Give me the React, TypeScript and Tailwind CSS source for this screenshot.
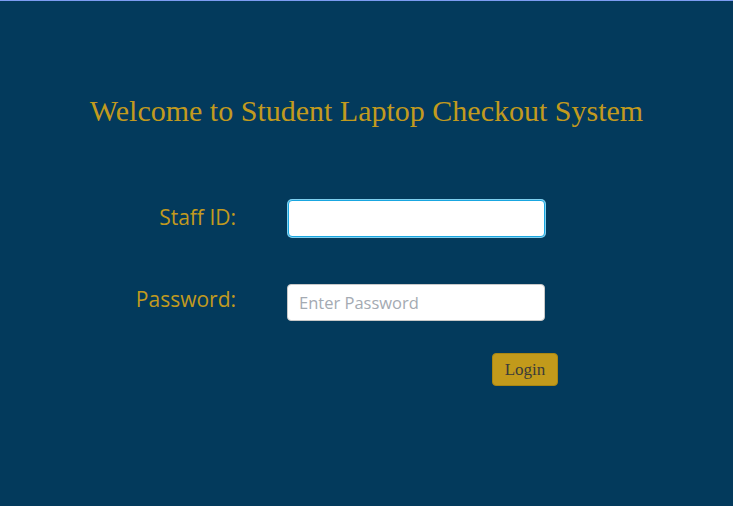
export default function App() {
  return (
    <div className="h-[506px] w-[733px] overflow-hidden border-t border-[#7d9cf2] bg-[#033a5c]">
      <h1 className="mt-[92px] text-center font-['Liberation_Serif',serif] text-[30px] leading-[36px] text-[#c29a1e]">
        Welcome to Student Laptop Checkout System
      </h1>

      <form className="mt-[71px] flex flex-col" onSubmit={(e) => e.preventDefault()}>
        <div className="flex items-center">
          <label className="mb-[2px] w-[236px] text-right font-['Open_Sans',sans-serif] text-[21px] text-[#c29a1e]">
            Staff ID:
          </label>
          <input
            type="text"
            className="ml-[52px] h-[37px] w-[257px] rounded-[4px] border border-[#19a6e0] bg-white px-3 shadow-[0_0_0_1px_#7fd0f0] outline-none"
          />
        </div>

        <div className="mt-[47px] flex items-center">
          <label className="mb-[5px] w-[236px] text-right font-['Open_Sans',sans-serif] text-[21px] text-[#c29a1e]">
            Password:
          </label>
          <input
            type="password"
            placeholder="Enter Password"
            className="ml-[51px] h-[37px] w-[258px] rounded-[4px] border border-[#c8c8c8] bg-white px-[11px] font-['Open_Sans',sans-serif] text-[16.5px] outline-none placeholder:text-[#a4aab2]"
          />
        </div>

        <div className="mt-[32px] flex pl-[492px]">
          <button
            type="submit"
            className="h-[33px] w-[66px] rounded-[4px] border border-[#a98612] bg-[#c29a1b] font-['Liberation_Serif',serif] text-[17px] text-[#3a3a3a]"
          >
            Login
          </button>
        </div>
      </form>
    </div>
  );
}
